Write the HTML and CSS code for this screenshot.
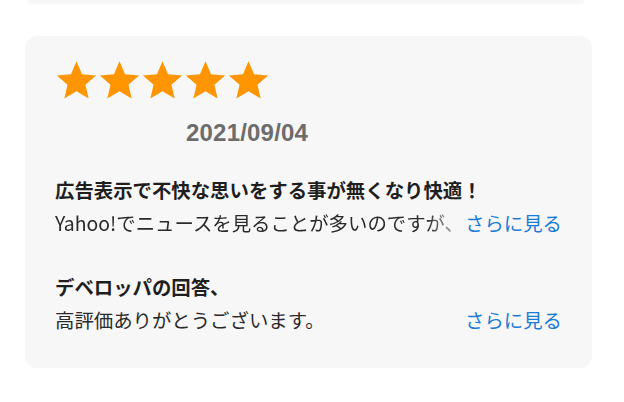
FILE: index.html
```html
<!DOCTYPE html>
<html lang="ja">
<head>
<meta charset="utf-8">
<link rel="stylesheet" href="styles.css">
</head>
<body>
<div class="page">
  <div class="prev-card"></div>
  <div class="card">
    <div class="stars">
      <svg class="star" viewBox="0 0 24 24"><path d="M12 1.5l3.09 7.26 7.86.7-5.96 5.2 1.78 7.69L12 18.27l-6.77 4.08 1.78-7.69-5.96-5.2 7.86-.7z"/></svg>
      <svg class="star" viewBox="0 0 24 24"><path d="M12 1.5l3.09 7.26 7.86.7-5.96 5.2 1.78 7.69L12 18.27l-6.77 4.08 1.78-7.69-5.96-5.2 7.86-.7z"/></svg>
      <svg class="star" viewBox="0 0 24 24"><path d="M12 1.5l3.09 7.26 7.86.7-5.96 5.2 1.78 7.69L12 18.27l-6.77 4.08 1.78-7.69-5.96-5.2 7.86-.7z"/></svg>
      <svg class="star" viewBox="0 0 24 24"><path d="M12 1.5l3.09 7.26 7.86.7-5.96 5.2 1.78 7.69L12 18.27l-6.77 4.08 1.78-7.69-5.96-5.2 7.86-.7z"/></svg>
      <svg class="star" viewBox="0 0 24 24"><path d="M12 1.5l3.09 7.26 7.86.7-5.96 5.2 1.78 7.69L12 18.27l-6.77 4.08 1.78-7.69-5.96-5.2 7.86-.7z"/></svg>
    </div>
    <div class="date">2021/09/04</div>
    <div class="section">
      <div class="title">広告表示で不快な思いをする事が無くなり快適！</div>
      <div class="row">
        <span class="text fade">Yahoo!でニュースを見ることが多いのですが、さすがに広告が多すぎて</span>
        <span class="more">さらに見る</span>
      </div>
    </div>
    <div class="section reply">
      <div class="title">デベロッパの回答、</div>
      <div class="row">
        <span class="text">高評価ありがとうございます。</span>
        <span class="more">さらに見る</span>
      </div>
    </div>
  </div>
</div>
</body>
</html>
```
FILE: styles.css
```css
html, body {
  margin: 0;
  padding: 0;
  background: #ffffff;
}
body {
  font-family: "Noto Sans CJK JP", "Noto Sans", sans-serif;
  color: #222222;
}
.page {
  width: 624px;
  height: 402px;
  position: relative;
  overflow: hidden;
}
.prev-card {
  height: 3px;
  margin: 0 40px 0 28px;
  background: #f7f7f7;
  border-radius: 0 0 10px 10px;
  box-shadow: 0 1px 2px rgba(0,0,0,0.03);
}
.card {
  margin: 33px 32px 0 25px;
  height: 332px;
  box-sizing: border-box;
  background: #f7f7f7;
  border-radius: 12px;
  padding: 21px 30px 0 30px;
}
.stars {
  display: flex;
  height: 46px;
}
.star {
  width: 43px;
  height: 46px;
  fill: #ff9500;
}
.date {
  margin: 16px 0 0 131px;
  font-family: "Liberation Sans", Arial, sans-serif;
  font-weight: bold;
  font-size: 24px;
  line-height: 28px;
  color: #6c6c6c;
  letter-spacing: 0.2px;
}
.section {
  margin-top: 28px;
}
.section.reply {
  margin-top: 34px;
}
.title {
  font-weight: bold;
  font-size: 19.4px;
  line-height: 30px;
  color: #1f1f1f;
}
.row {
  display: flex;
  align-items: baseline;
  margin-top: 3px;
  font-size: 19.4px;
  line-height: 30px;
}
.text {
  flex: 1;
  min-width: 0;
  white-space: nowrap;
  overflow: hidden;
  color: #2a2a2a;
}
.fade {
  -webkit-mask-image: linear-gradient(to right, #000 0, #000 calc(100% - 36px), rgba(0,0,0,0.15) 100%);
  mask-image: linear-gradient(to right, #000 0, #000 calc(100% - 36px), rgba(0,0,0,0.15) 100%);
}
.more {
  flex: none;
  margin-left: 2px;
  color: #1a7bd6;
}
```
